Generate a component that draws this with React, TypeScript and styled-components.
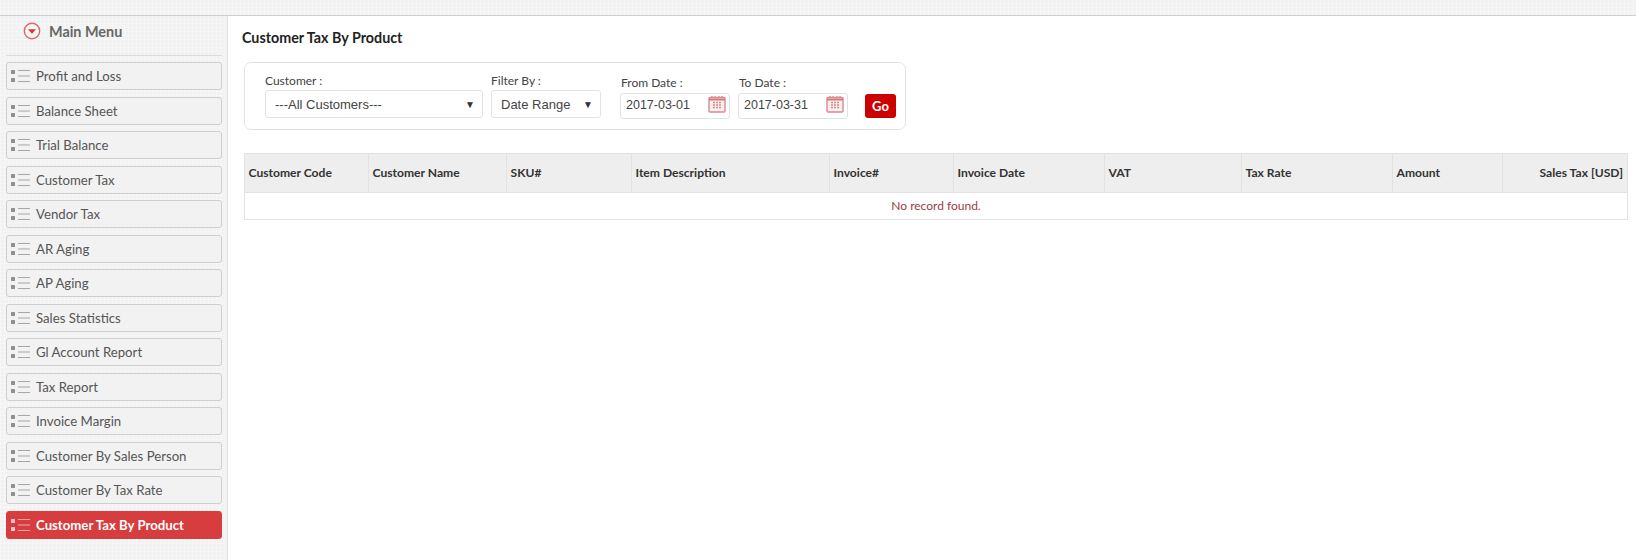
import { FC } from 'react';
import styled, { createGlobalStyle } from 'styled-components';

const menuItems = [
  'Profit and Loss',
  'Balance Sheet',
  'Trial Balance',
  'Customer Tax',
  'Vendor Tax',
  'AR Aging',
  'AP Aging',
  'Sales Statistics',
  'Gl Account Report',
  'Tax Report',
  'Invoice Margin',
  'Customer By Sales Person',
  'Customer By Tax Rate',
  'Customer Tax By Product',
];

const columns = [
  { label: 'Customer Code', width: 124 },
  { label: 'Customer Name', width: 138 },
  { label: 'SKU#', width: 125 },
  { label: 'Item Description', width: 198 },
  { label: 'Invoice#', width: 124 },
  { label: 'Invoice Date', width: 151 },
  { label: 'VAT', width: 137 },
  { label: 'Tax Rate', width: 151 },
  { label: 'Amount', width: 110 },
  { label: 'Sales Tax [USD]', width: 125, right: true },
];

const ListIcon = () => (
  <svg width="22" height="14" viewBox="0 0 22 14" fill="none">
    <rect x="0" y="1" width="4" height="4" rx="0.5" fill="currentColor" opacity="0.7" />
    <rect x="0" y="9" width="4" height="4" rx="0.5" fill="currentColor" opacity="0.7" />
    <path d="M7 1.5H19M7 7H19M7 12.5H19" stroke="currentColor" strokeWidth="1.2" opacity="0.55" />
  </svg>
);

const CalendarIcon = () => (
  <svg width="18" height="18" viewBox="0 0 18 18" fill="none">
    <rect x="1" y="2.5" width="16" height="14.5" rx="1" fill="#fbeeee" stroke="#d98a8a" strokeWidth="1.4" />
    <path d="M1 4.5H17" stroke="#d47c7c" strokeWidth="2" />
    <path d="M4 1V3M7 1V3M11 1V3M14 1V3" stroke="#d98a8a" strokeWidth="1.2" />
    <path
      d="M5 7.5H7M8 7.5H10M11 7.5H13M5 10H7M8 10H10M11 10H13M5 12.5H7M8 12.5H10M11 12.5H13"
      stroke="#d98a8a"
      strokeWidth="1.6"
    />
  </svg>
);

const App: FC = () => {
  return (
    <>
      <GlobalStyle />
      <Page>
        <TopStrip />
        <Body>
          <Sidebar>
            <MenuHeader>
              <svg width="18" height="18" viewBox="0 0 18 18" fill="none">
                <circle cx="9" cy="9" r="7.7" stroke="#d9696b" strokeWidth="1.4" />
                <path d="M5 7.2H13L9 11.8Z" fill="#d2383b" />
              </svg>
              <MenuTitle>Main Menu</MenuTitle>
            </MenuHeader>
            <Menu>
              {menuItems.map((item, i) => (
                <MenuItem key={item} $active={i === menuItems.length - 1}>
                  <ListIcon />
                  <span>{item}</span>
                </MenuItem>
              ))}
            </Menu>
          </Sidebar>
          <Main>
            <PageTitle>Customer Tax By Product</PageTitle>
            <FilterPanel>
              <Field $width={218} $mr={8} $pt={7}>
                <FieldLabel $h={20} $pl={0}>Customer :</FieldLabel>
                <SelectBox>
                  <span>---All Customers---</span>
                  <Arrow>▼</Arrow>
                </SelectBox>
              </Field>
              <Field $width={110} $mr={19} $pt={7}>
                <FieldLabel $h={20} $pl={0}>Filter By :</FieldLabel>
                <SelectBox>
                  <span>Date Range</span>
                  <Arrow>▼</Arrow>
                </SelectBox>
              </Field>
              <Field $width={110} $mr={8} $pt={9}>
                <FieldLabel $h={21} $pl={1}>From Date :</FieldLabel>
                <DateBox>
                  <DateInput defaultValue="2017-03-01" readOnly />
                  <CalendarIcon />
                </DateBox>
              </Field>
              <Field $width={110} $mr={17} $pt={9}>
                <FieldLabel $h={21} $pl={1}>To Date :</FieldLabel>
                <DateBox>
                  <DateInput defaultValue="2017-03-31" readOnly />
                  <CalendarIcon />
                </DateBox>
              </Field>
              <GoButton>Go</GoButton>
            </FilterPanel>
            <Table>
              <colgroup>
                {columns.map((col) => (
                  <col key={col.label} style={{ width: col.width }} />
                ))}
              </colgroup>
              <thead>
                <tr>
                  {columns.map((col) => (
                    <HeadCell key={col.label} $right={col.right}>
                      {col.label}
                    </HeadCell>
                  ))}
                </tr>
              </thead>
              <tbody>
                <tr>
                  <EmptyCell colSpan={columns.length}>No record found.</EmptyCell>
                </tr>
              </tbody>
            </Table>
          </Main>
        </Body>
      </Page>
    </>
  );
};

export default App;

const GlobalStyle = createGlobalStyle`
  html, body {
    margin: 0;
    padding: 0;
    height: 560px;
    overflow: hidden;
    background: #f3f3f3;
  }
  * {
    box-sizing: border-box;
  }
`;

const texture = `
  repeating-linear-gradient(0deg, rgba(255, 255, 255, 0.28) 0 1px, transparent 1px 4px),
  repeating-linear-gradient(90deg, rgba(255, 255, 255, 0.28) 0 1px, transparent 1px 4px),
  #f2f2f2
`;

const Page = styled.div`
  width: 1636px;
  height: 560px;
  display: flex;
  flex-direction: column;
  font-family: Lato, 'Liberation Sans', sans-serif;
  background: ${texture};
`;

const TopStrip = styled.div`
  height: 16px;
  flex: none;
  border-bottom: 1px solid #cfcfcf;
`;

const Body = styled.div`
  flex: 1;
  display: flex;
  min-height: 0;
`;

const Sidebar = styled.aside`
  width: 228px;
  flex: none;
  padding: 0 5px 0 6px;
  border-right: 1px solid #e2e2e2;
`;

const MenuHeader = styled.div`
  height: 40px;
  display: flex;
  align-items: center;
  gap: 8px;
  padding: 0 0 9px 17px;
  border-bottom: 1px solid #dcdcdc;
  margin-bottom: 6px;
`;

const MenuTitle = styled.span`
  font-size: 14.4px;
  font-weight: 700;
  color: #666;
`;

const Menu = styled.div`
  display: flex;
  flex-direction: column;
  gap: 6.54px;
`;

const MenuItem = styled.div<{ $active?: boolean }>`
  height: 28px;
  display: flex;
  align-items: center;
  gap: 3px;
  padding-left: 4px;
  border: 1px solid ${(props) => (props.$active ? '#d73c3f' : '#cfcfcf')};
  border-radius: 3px;
  font-size: 13.2px;
  font-weight: ${(props) => (props.$active ? 700 : 400)};
  color: ${(props) => (props.$active ? '#fff' : '#555')};
  background: ${(props) => (props.$active ? '#d73c3f' : '#f2f2f2')};
  svg {
    flex: none;
    color: ${(props) => (props.$active ? '#fff' : '#666')};
  }
`;

const Main = styled.main`
  flex: 1;
  min-width: 0;
  background: #fff;
  padding: 0 9px 0 15px;
`;

const PageTitle = styled.h1`
  margin: 0 0 0 -1px;
  padding-top: 13px;
  height: 46px;
  font-size: 14.3px;
  line-height: 17px;
  font-weight: 700;
  color: #222;
`;

const FilterPanel = styled.div`
  width: 662px;
  height: 68px;
  margin-left: 1px;
  display: flex;
  align-items: flex-start;
  padding: 0 0 0 20px;
  border: 1px solid #e3e3e3;
  border-radius: 7px;
`;

const Field = styled.div<{ $width: number; $mr: number; $pt: number }>`
  width: ${(props) => props.$width}px;
  margin-right: ${(props) => props.$mr}px;
  padding-top: ${(props) => props.$pt}px;
`;

const FieldLabel = styled.div<{ $h: number; $pl: number }>`
  height: ${(props) => props.$h}px;
  line-height: 22px;
  padding-left: ${(props) => props.$pl}px;
  font-size: 12px;
  color: #444;
`;

const SelectBox = styled.div`
  height: 28px;
  display: flex;
  align-items: center;
  justify-content: space-between;
  padding: 0 7px 0 9px;
  border: 1px solid #e3e3e3;
  border-radius: 3px;
  font-family: 'Liberation Sans', Arial, sans-serif;
  font-size: 13px;
  color: #444;
`;

const Arrow = styled.span`
  font-size: 10px;
  color: #333;
`;

const DateBox = styled.div`
  height: 26px;
  display: flex;
  align-items: center;
  padding-right: 3px;
  border: 1px solid #e3e3e3;
  border-radius: 3px;
  svg {
    flex: none;
    margin-bottom: 5px;
  }
`;

const DateInput = styled.input`
  flex: 1;
  min-width: 0;
  height: 100%;
  padding: 0 0 2px 5px;
  border: 0;
  outline: 0;
  background: transparent;
  font-family: 'Liberation Sans', Arial, sans-serif;
  font-size: 12.5px;
  color: #444;
`;

const GoButton = styled.button`
  width: 31px;
  height: 24px;
  margin-top: 31px;
  padding: 0;
  border: 0;
  border-radius: 3px;
  background: #cc0000;
  color: #fff;
  font-family: Lato, sans-serif;
  font-size: 13px;
  font-weight: 700;
`;

const Table = styled.table`
  width: 1383px;
  margin: 23px 0 0 1px;
  table-layout: fixed;
  border-collapse: collapse;
`;

const HeadCell = styled.th<{ $right?: boolean }>`
  height: 39px;
  padding: 0 4px 2px 3.5px;
  background: #eee;
  border: 1px solid #e2e2e2;
  font-size: 12.1px;
  font-weight: 700;
  color: #333;
  text-align: ${(props) => (props.$right ? 'right' : 'left')};
`;

const EmptyCell = styled.td`
  height: 27px;
  padding: 0 0 2px;
  border: 1px solid #e2e2e2;
  font-size: 12px;
  color: #9c3a48;
  text-align: center;
`;
